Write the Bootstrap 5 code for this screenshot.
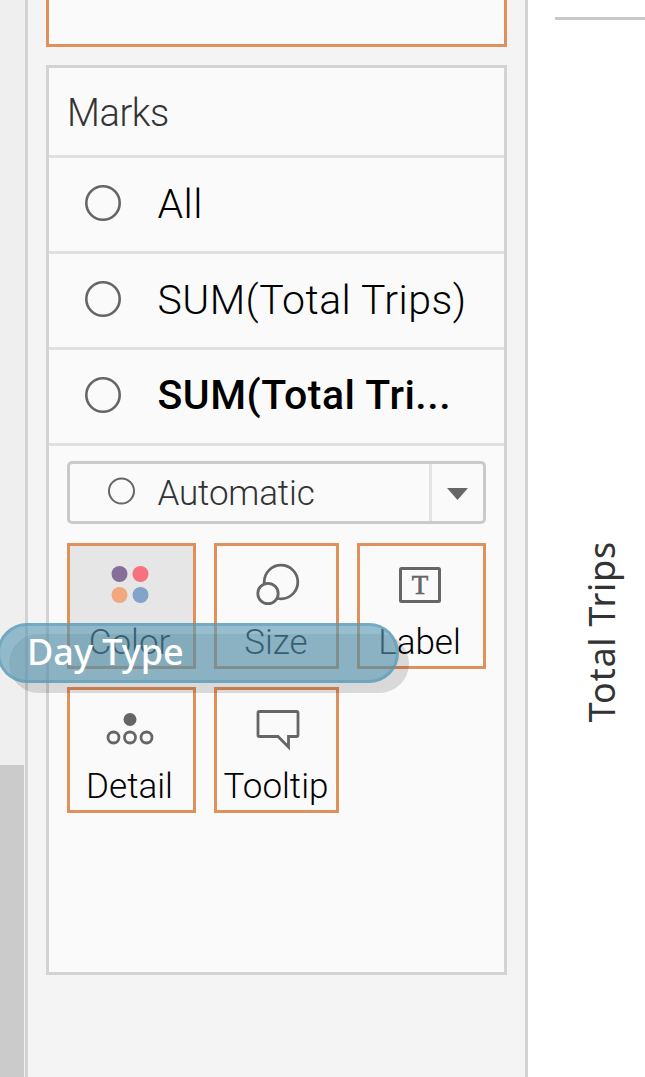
<!DOCTYPE html>
<html lang="en">
<head>
<meta charset="utf-8">
<title>Marks</title>
<link href="https://cdn.jsdelivr.net/npm/bootstrap@5.3.0/dist/css/bootstrap.min.css" rel="stylesheet">
<style>
body{font-family:Roboto,"Liberation Sans",sans-serif;font-weight:300;color:#000;background:#fff;height:1077px;overflow:hidden}
.rail{width:25px;background:#efefef;padding-top:765px}
.thumb{width:24px;height:312px;background:#cbcbcb}
.pane{width:503px;background:#f4f4f4;border:solid #d3d3d3;border-width:0 3px;padding:0 18px}
.shelf{height:47px;border:3px solid #e0905b;border-top:0;background:#fafafa;margin-bottom:18px}
.marks{height:910px;border:3px solid #d3d3d3;background:#fafafa}
.marks-head{height:90px;border-bottom:3px solid #dfdfdf;padding-left:18px;font-size:38px;line-height:90px;letter-spacing:-.4px;color:#333}
.layer{height:96px;border-bottom:3px solid #dfdfdf;padding-left:36px;font-size:41px;line-height:93px;letter-spacing:.45px;white-space:nowrap}
.layer svg{width:36px;height:36px;margin-right:36.500px;margin-top:-3px}
.layer.active{font-weight:500;letter-spacing:.52px;line-height:89px}
.layer.active span{padding-bottom:3px}
.tools{padding:15px 18px}
.picker{height:63px;border:3px solid #cacaca;border-radius:5px;color:#333;font-size:35px;letter-spacing:-.15px;margin-bottom:19px}
.picker-value{flex:1;padding-left:37px}
.picker-value svg{margin:-4px 22.500px 0 0}
.picker-value span{padding-top:4px}
.picker-arrow{width:54px;border-left:3px solid #e4e4e4}
.tiles{display:grid;grid-template-columns:129px 125px 129px;gap:18px}
.tile{height:126px;border:3px solid #e0905b;font-size:35px;text-align:center;white-space:nowrap}
.tile.wide{padding-right:4px}
.tile.on{background:#e6e6e6}
.tile svg{display:block;margin:0 auto;width:60px;height:77px}
.tile div{line-height:40px}
.tile:not(.wide) svg{transform:translateX(.5px)}
.tile:not(.wide) div{padding-right:1px}
.chart{flex:1}
.rule{height:3px;background:#cacaca;margin:17px 0 0 27px}
.axis{writing-mode:vertical-rl;transform:rotate(180deg);font:400 36px/48px "Noto Sans",sans-serif;letter-spacing:.75px;color:#333;margin:521px 0 0 50px;white-space:nowrap}
.pill{left:-3px;top:623px;width:402px;height:60px;border-radius:30px;border:3px solid rgba(84,154,182,.5);background:rgba(88,154,180,.62);color:#fff;font:500 36px/52px "Noto Sans",sans-serif;padding-left:27px;z-index:3}
.pill-shade{left:9px;top:634px;width:400px;height:59px;border-radius:30px;background:rgba(0,0,0,.13);z-index:2}
</style>
</head>
<body class="d-flex position-relative">
<aside class="rail flex-shrink-0"><div class="thumb"></div></aside>
<main class="pane flex-shrink-0">
  <div class="shelf"></div>
  <section class="marks">
    <div class="marks-head">Marks</div>
    <div class="layer d-flex align-items-center"><svg viewBox="0 0 36 36"><circle cx="18" cy="18" r="16.7" fill="none" stroke="#666" stroke-width="2.6"/></svg><span>All</span></div>
    <div class="layer d-flex align-items-center"><svg viewBox="0 0 36 36"><circle cx="18" cy="18" r="16.7" fill="none" stroke="#666" stroke-width="2.6"/></svg><span>SUM(Total Trips)</span></div>
    <div class="layer active d-flex align-items-center"><svg viewBox="0 0 36 36"><circle cx="18" cy="18" r="16.7" fill="none" stroke="#666" stroke-width="2.6"/></svg><span>SUM(Total Tri...</span></div>
    <div class="tools">
      <div class="picker d-flex">
        <div class="picker-value d-flex align-items-center"><svg width="28" height="28" viewBox="0 0 28 28"><circle cx="14.500" cy="14" r="12.500" fill="none" stroke="#666" stroke-width="2"/></svg><span>Automatic</span></div>
        <div class="picker-arrow"><svg class="d-block" width="51" height="57" viewBox="0 0 51 57"><path d="M15 24h21L25.500 36z" fill="#666"/></svg></div>
      </div>
      <div class="tiles">
        <div class="tile wide on"><svg viewBox="0 0 60 77"><circle cx="19.500" cy="28" r="8" fill="#866f99"/><circle cx="40.500" cy="28" r="8" fill="#f8717f"/><circle cx="19.500" cy="49" r="8" fill="#f2a780"/><circle cx="40.500" cy="49" r="8" fill="#82a4ca"/></svg><div>Color</div></div>
        <div class="tile"><svg viewBox="0 0 60 77" fill="none" stroke="#666" stroke-width="2.800"><circle cx="33.500" cy="36" r="16.800"/><circle cx="20.500" cy="47.500" r="10.200" fill="#fafafa"/></svg><div>Size</div></div>
        <div class="tile wide"><svg viewBox="0 0 60 77"><rect x="10.500" y="22.500" width="39" height="33" rx="1" fill="none" stroke="#666" stroke-width="3"/><text x="30" y="48" text-anchor="middle" font-family="Liberation Serif,serif" font-weight="400" font-size="27" fill="#666" stroke="#666" stroke-width=".6">T</text></svg><div>Label</div></div>
        <div class="tile wide"><svg viewBox="0 0 60 77"><circle cx="30" cy="29.500" r="6.500" fill="#666"/><g fill="none" stroke="#666" stroke-width="2.800"><circle cx="13.500" cy="47.500" r="5.500"/><circle cx="30" cy="47.500" r="5.500"/><circle cx="46.500" cy="47.500" r="5.500"/></g></svg><div>Detail</div></div>
        <div class="tile"><svg viewBox="0 0 60 77"><path d="M12 21.500H49Q50.500 21.500 50.500 23V45Q50.500 46.500 49 46.500H41V57L30.500 46.500H12Q10.500 46.500 10.500 45V23Q10.500 21.500 12 21.500Z" fill="none" stroke="#666" stroke-width="2.800"/></svg><div>Tooltip</div></div>
      </div>
    </div>
  </section>
</main>
<section class="chart">
  <div class="rule"></div>
  <div class="axis">Total Trips</div>
</section>
<div class="pill-shade position-absolute"></div>
<div class="pill position-absolute">Day Type</div>
<script src="https://cdn.jsdelivr.net/npm/bootstrap@5.3.0/dist/js/bootstrap.bundle.min.js"></script>
</body>
</html>
